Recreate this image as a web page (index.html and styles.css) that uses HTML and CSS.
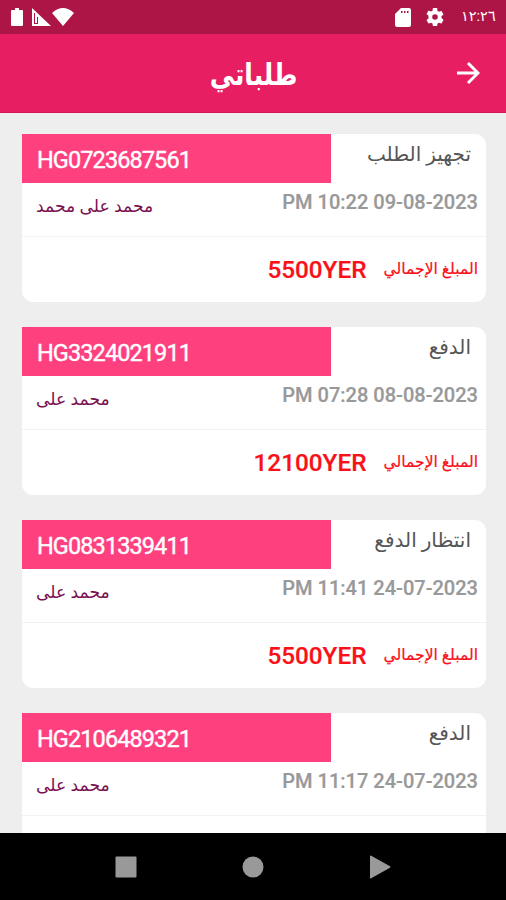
FILE: index.html
```html
<!DOCTYPE html>
<html lang="ar">
<head>
<meta charset="utf-8">
<meta name="viewport" content="width=device-width">
<title>طلباتي</title>
<link rel="stylesheet" href="styles.css">
</head>
<body>
<div class="status-bar">
  <div class="status-icons">
    <svg class="battery" viewBox="0 0 12 18"><path d="M4 0h4v2h3q1 0 1 1v14q0 1-1 1H1q-1 0-1-1V3q0-1 1-1h3z"/></svg>
    <svg class="signal" viewBox="0 0 19 18"><path fill-rule="evenodd" d="M0 0l19 18H0zM2 5v11h4V9H5v6H3V5z"/></svg>
    <svg class="wifi" viewBox="0 0 22 18"><path d="M0 5Q11-5 22 5L11 18z"/></svg>
  </div>
  <div class="status-icons">
    <svg class="sd" viewBox="0 0 16 19"><path fill-rule="evenodd" d="M6 0h8q2 0 2 2v15q0 2-2 2H2q-2 0-2-2V6zM6 3v2h1.500V3zM9 3v2h1.500V3zM12 3v2h1.500V3z"/></svg>
    <svg class="gear" viewBox="2 2 20 20"><path d="M19.14 12.94c.04-.3.06-.61.06-.94s-.02-.64-.07-.94l2.03-1.58a.49.49 0 0 0 .12-.61l-1.92-3.32a.49.49 0 0 0-.59-.22l-2.39.96a7 7 0 0 0-1.62-.94l-.36-2.54A.48.48 0 0 0 13.92 2h-3.84a.48.48 0 0 0-.48.41l-.36 2.54a7 7 0 0 0-1.62.94l-2.39-.96a.48.48 0 0 0-.59.22L2.72 8.47a.48.48 0 0 0 .12.61l2.03 1.58a6 6 0 0 0 0 2.88l-2.03 1.58a.49.49 0 0 0-.12.61l1.92 3.32c.12.22.37.29.59.22l2.39-.96c.5.38 1.03.7 1.62.94l.36 2.54c.05.24.24.41.48.41h3.84c.24 0 .44-.17.48-.41l.36-2.54a7 7 0 0 0 1.62-.94l2.39.96c.22.08.47 0 .59-.22l1.92-3.32a.48.48 0 0 0-.12-.61zM12 15.1a3.1 3.1 0 1 1 0-6.2 3.1 3.1 0 0 1 0 6.2z"/></svg>
    <span class="clock">١٢:٢٦</span>
  </div>
</div>
<header class="app-bar">
  <h1 class="title">طلباتي</h1>
  <svg class="arrow" viewBox="0 0 24 24"><path d="M1 12h21M12 2l10 10-10 10"/></svg>
</header>
<main class="orders">
  <article class="card">
    <div class="top"><div class="code"><span>HG0723687561</span></div><div class="state" dir="rtl"><span>تجهيز الطلب</span></div></div>
    <div class="info"><span class="name" dir="rtl">محمد على محمد</span><span class="date">PM 10:22 09-08-2023</span></div>
    <div class="total"><span class="amount">5500YER</span><span class="label" dir="rtl">المبلغ الإجمالي</span></div>
  </article>
  <article class="card">
    <div class="top"><div class="code"><span>HG3324021911</span></div><div class="state" dir="rtl"><span>الدفع</span></div></div>
    <div class="info"><span class="name" dir="rtl">محمد على</span><span class="date">PM 07:28 08-08-2023</span></div>
    <div class="total"><span class="amount">12100YER</span><span class="label" dir="rtl">المبلغ الإجمالي</span></div>
  </article>
  <article class="card">
    <div class="top"><div class="code"><span>HG0831339411</span></div><div class="state" dir="rtl"><span>انتظار الدفع</span></div></div>
    <div class="info"><span class="name" dir="rtl">محمد على</span><span class="date">PM 11:41 24-07-2023</span></div>
    <div class="total"><span class="amount">5500YER</span><span class="label" dir="rtl">المبلغ الإجمالي</span></div>
  </article>
  <article class="card">
    <div class="top"><div class="code"><span>HG2106489321</span></div><div class="state" dir="rtl"><span>الدفع</span></div></div>
    <div class="info"><span class="name" dir="rtl">محمد على</span><span class="date">PM 11:17 24-07-2023</span></div>
    <div class="total"></div>
  </article>
</main>
<nav class="nav-bar">
  <svg viewBox="0 0 22 22"><rect x=".5" y=".5" width="21" height="21" rx="1"/></svg>
  <svg viewBox="0 0 22 22"><circle cx="11" cy="11" r="10.5"/></svg>
  <svg viewBox="0 0 22 24"><path d="M1 1.5q0-1.5 1.2-.8L21 11.3q1 .7 0 1.4L2.2 23.3Q1 24 1 22.5z"/></svg>
</nav>
</body>
</html>
```
FILE: styles.css
```css
* { box-sizing: border-box; }
body {
  margin: 0;
  height: 900px;
  display: flex;
  flex-direction: column;
  overflow: hidden;
  background: #eee;
  font-family: Roboto, "DejaVu Sans", sans-serif;
}
svg { display: block; fill: #fff; }
.status-bar {
  flex: 0 0 34px;
  display: flex;
  justify-content: space-between;
  padding: 0 11px;
  background: #ad1546;
}
.status-icons { display: flex; align-items: center; }
.battery { width: 12px; height: 18px; }
.signal { width: 19px; height: 18px; margin-left: 9px; }
.wifi { width: 22px; height: 18px; margin-left: 1px; }
.sd { width: 16px; height: 19px; }
.gear { width: 18px; height: 18px; margin-left: 15px; }
.clock {
  width: 34px;
  margin-left: 17px;
  color: #fff;
  font-size: 14.5px;
  line-height: 34px;
  white-space: nowrap;
}
.app-bar {
  flex: 0 0 79px;
  display: grid;
  grid-template-columns: 1fr auto 1fr;
  align-items: center;
  padding: 0 26px;
  background: #e81e62;
  border-bottom: 1px solid #d5145a;
}
.title {
  grid-column: 2;
  margin: 0;
  padding: 3px 0 0 2px;
  color: #fff;
  font-size: 30px;
  line-height: 60px;
  transform: scaleX(.83);
}
.arrow {
  justify-self: end;
  width: 24px;
  height: 24px;
  fill: none;
  stroke: #fff;
  stroke-width: 3;
}
.orders {
  flex: 1;
  min-height: 0;
  overflow: hidden;
  padding: 21px 20px 0 22px;
  display: flex;
  flex-direction: column;
  gap: 25.5px;
}
.card {
  flex: 0 0 167.6px;
  display: grid;
  grid-template-rows: 49px 54px 1fr;
  background: #fff;
  border-radius: 0 11px 11px 11px;
}
.top {
  display: grid;
  grid-template-columns: 309px 1fr;
  grid-template-rows: 49px;
}
.code {
  padding: 3px 0 0 15px;
  background: #ff407f;
  color: #fff;
  font-size: 23.5px;
  line-height: 46px;
  letter-spacing: -.9px;
  -webkit-text-stroke: .4px #fff;
}
.code span { display: block; padding-top: 1px; line-height: 45px; }
.state {
  padding: 0 15px 0 0;
  color: #555;
  font-size: 20px;
  line-height: 40px;
  white-space: nowrap;
}
.info {
  display: flex;
  justify-content: space-between;
  padding: 0 8px 0 14px;
  border-bottom: 1px solid #f2f2f2;
}
.name { color: #7a1050; font-size: 17.2px; line-height: 46px; }
.date { color: #999; font-size: 20.05px; font-weight: 500; line-height: 38px; -webkit-text-stroke: .2px #999; }
.total {
  display: flex;
  justify-content: flex-end;
  align-items: center;
  gap: 17px;
  padding-right: 8px;
  color: #fa1018;
}
.amount { font-size: 24.3px; font-weight: 500; -webkit-text-stroke: .2px #fa1018; }
.label { font-size: 15.6px; -webkit-text-stroke: .2px #fa1018; }
.nav-bar {
  flex: 0 0 67px;
  display: grid;
  grid-template-columns: repeat(3, 127px);
  justify-content: center;
  justify-items: center;
  align-items: center;
  background: #000;
}
.nav-bar svg { width: 22px; height: 24px; fill: #999; }
```
